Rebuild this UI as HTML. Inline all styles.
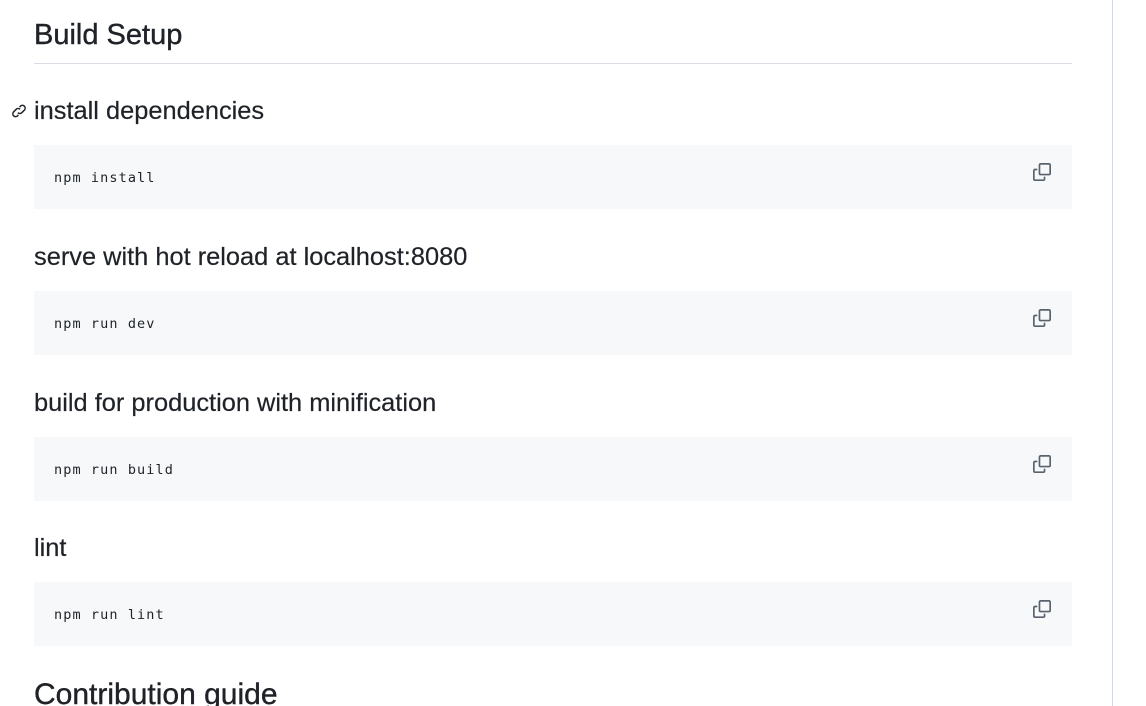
<!DOCTYPE html>
<html><head><meta charset="utf-8"><style>
html,body{margin:0;padding:0;background:#fff;width:1146px;height:706px;overflow:hidden;position:relative;font-family:"Liberation Sans",sans-serif;color:#1f2328}
.a{position:absolute;white-space:nowrap}
.h1{left:34px;top:16px;font-size:29px;line-height:38px;font-weight:normal;-webkit-text-stroke:0.4px #1f2328}
.hr{position:absolute;left:34px;top:63px;width:1038px;height:1px;background:#d8dee4}
.h3{left:34px;font-size:25.4px;line-height:30px;font-weight:normal;-webkit-text-stroke:0.2px #1f2328}
.pre{position:absolute;left:34px;width:1038px;height:64px;background:#f6f8fa}
.pre span{position:absolute;left:20px;top:24px;font-family:"DejaVu Sans Mono","Liberation Mono",monospace;font-size:13.5px;letter-spacing:1.1px;line-height:18px;color:#1f2328}
.pre svg{position:absolute;left:999px;top:18px}
.vl{position:absolute;left:1112px;top:0;width:1px;height:706px;background:#d0d7e2}
</style></head><body>
<div class="a h1">Build Setup</div>
<div class="hr"></div>
<svg class="a" style="left:10px;top:102px" width="18" height="18" viewBox="0 0 16 16" fill="none" stroke="#1f2328" stroke-width="1.3"><path d="M7 9.5a2.5 2.5 0 0 0 3.5 0l2.5-2.5a2.5 2.5 0 0 0-3.5-3.5l-1 1"/><path d="M9 6.5a2.5 2.5 0 0 0-3.5 0L3 9a2.5 2.5 0 0 0 3.5 3.5l1-1"/></svg>
<div class="a h3" style="top:96px">install dependencies</div>
<div class="pre" style="top:145px"><span>npm install</span><svg width="18" height="18" viewBox="0 0 16 16" fill="#59636e"><path d="M0 6.75C0 5.784.784 5 1.75 5h1.5a.75.75 0 0 1 0 1.5h-1.5a.25.25 0 0 0-.25.25v7.5c0 .138.112.25.25.25h7.5a.25.25 0 0 0 .25-.25v-1.5a.75.75 0 0 1 1.5 0v1.5A1.75 1.75 0 0 1 9.25 16h-7.5A1.75 1.75 0 0 1 0 14.25Z"/><path d="M5 1.75C5 .784 5.784 0 6.75 0h7.5C15.216 0 16 .784 16 1.75v7.5A1.75 1.75 0 0 1 14.25 11h-7.5A1.75 1.75 0 0 1 5 9.25Zm1.75-.25a.25.25 0 0 0-.25.25v7.5c0 .138.112.25.25.25h7.5a.25.25 0 0 0 .25-.25v-7.5a.25.25 0 0 0-.25-.25Z"/></svg></div>
<div class="a h3" style="top:242px">serve with hot reload at localhost:8080</div>
<div class="pre" style="top:291px"><span>npm run dev</span><svg width="18" height="18" viewBox="0 0 16 16" fill="#59636e"><path d="M0 6.75C0 5.784.784 5 1.75 5h1.5a.75.75 0 0 1 0 1.5h-1.5a.25.25 0 0 0-.25.25v7.5c0 .138.112.25.25.25h7.5a.25.25 0 0 0 .25-.25v-1.5a.75.75 0 0 1 1.5 0v1.5A1.75 1.75 0 0 1 9.25 16h-7.5A1.75 1.75 0 0 1 0 14.25Z"/><path d="M5 1.75C5 .784 5.784 0 6.75 0h7.5C15.216 0 16 .784 16 1.75v7.5A1.75 1.75 0 0 1 14.25 11h-7.5A1.75 1.75 0 0 1 5 9.25Zm1.750-.25a.25.25 0 0 0-.25.25v7.5c0 .138.112.25.25.25h7.5a.25.25 0 0 0 .25-.25v-7.5a.25.25 0 0 0-.25-.25Z"/></svg></div>
<div class="a h3" style="top:388px">build for production with minification</div>
<div class="pre" style="top:437px"><span>npm run build</span><svg width="18" height="18" viewBox="0 0 16 16" fill="#59636e"><path d="M0 6.75C0 5.784.784 5 1.75 5h1.5a.75.75 0 0 1 0 1.5h-1.5a.25.25 0 0 0-.25.25v7.5c0 .138.112.25.25.25h7.5a.25.25 0 0 0 .25-.25v-1.5a.75.75 0 0 1 1.5 0v1.5A1.75 1.75 0 0 1 9.25 16h-7.5A1.75 1.75 0 0 1 0 14.25Z"/><path d="M5 1.75C5 .784 5.784 0 6.75 0h7.5C15.216 0 16 .784 16 1.75v7.5A1.75 1.75 0 0 1 14.25 11h-7.5A1.75 1.75 0 0 1 5 9.25Zm1.75-.25a.25.25 0 0 0-.25.25v7.5c0 .138.112.25.25.25h7.5a.25.25 0 0 0 .25-.25v-7.5a.25.25 0 0 0-.25-.25Z"/></svg></div>
<div class="a h3" style="top:533px">lint</div>
<div class="pre" style="top:582px"><span>npm run lint</span><svg width="18" height="18" viewBox="0 0 16 16" fill="#59636e"><path d="M0 6.75C0 5.784.784 5 1.75 5h1.5a.75.75 0 0 1 0 1.5h-1.5a.25.25 0 0 0-.25.25v7.5c0 .138.112.25.25.25h7.5a.25.25 0 0 0 .25-.25v-1.5a.75.75 0 0 1 1.5 0v1.5A1.75 1.75 0 0 1 9.25 16h-7.5A1.75 1.75 0 0 1 0 14.25Z"/><path d="M5 1.75C5 .784 5.784 0 6.75 0h7.5C15.216 0 16 .784 16 1.75v7.5A1.75 1.75 0 0 1 14.25 11h-7.5A1.75 1.75 0 0 1 5 9.25Zm1.75-.25a.25.25 0 0 0-.25.25v7.5c0 .138.112.25.25.25h7.5a.25.25 0 0 0 .25-.25v-7.5a.25.25 0 0 0-.25-.25Z"/></svg></div>
<div class="a h1" style="top:676px;font-size:30px">Contribution guide</div>
<div class="vl"></div>
</body></html>
